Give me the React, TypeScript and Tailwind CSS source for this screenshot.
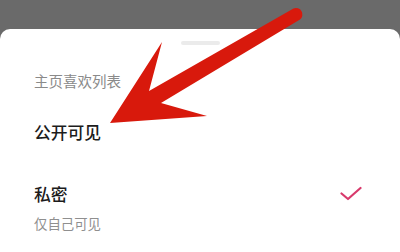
export default function App() {
  return (
    <div
      className="relative flex h-[252px] w-[400px] flex-col overflow-hidden bg-[#6a6a6a]"
      style={{ fontFamily: '"Noto Sans CJK SC", "Noto Sans", sans-serif' }}
    >
      <div className="h-[29px] shrink-0" />

      {/* Bottom sheet */}
      <div className="flex flex-1 flex-col rounded-t-[10px] bg-white px-[34px]">
        <div className="mx-auto mt-[12px] h-[4px] w-[39px] rounded-full bg-[#ebebeb]" />

        <p className="mt-[26px] text-[14.5px] leading-[20px] text-[#8a8a8a]">主页喜欢列表</p>

        <p className="mt-[29px] text-[16.8px] font-medium leading-[24px] text-[#1c1c1c]">公开可见</p>

        <div className="mt-[38px] flex items-center justify-between">
          <p className="text-[16.8px] font-medium leading-[24px] text-[#1c1c1c]">私密</p>
          <svg width="22" height="16" viewBox="0 0 22 16" className="mr-[4px]" fill="none">
            <path d="M1.5 7.5 L8 13 L20.5 2" stroke="#d83a6c" strokeWidth="2.2" strokeLinecap="round" strokeLinejoin="round" />
          </svg>
        </div>
        <p className="mt-[7px] text-[13.4px] leading-[20px] text-[#8f8f8f]">仅自己可见</p>
      </div>

      {/* Red annotation arrow */}
      <svg className="absolute left-0 top-0" width="400" height="252" viewBox="0 0 400 252">
        <path
          d="M110 123 L162 42 L149 91 L293.5 8.5 A6.5 6.5 0 0 1 300 19.6 L161 103 L207 116 Z"
          fill="#d8190c"
        />
      </svg>
    </div>
  )
}
